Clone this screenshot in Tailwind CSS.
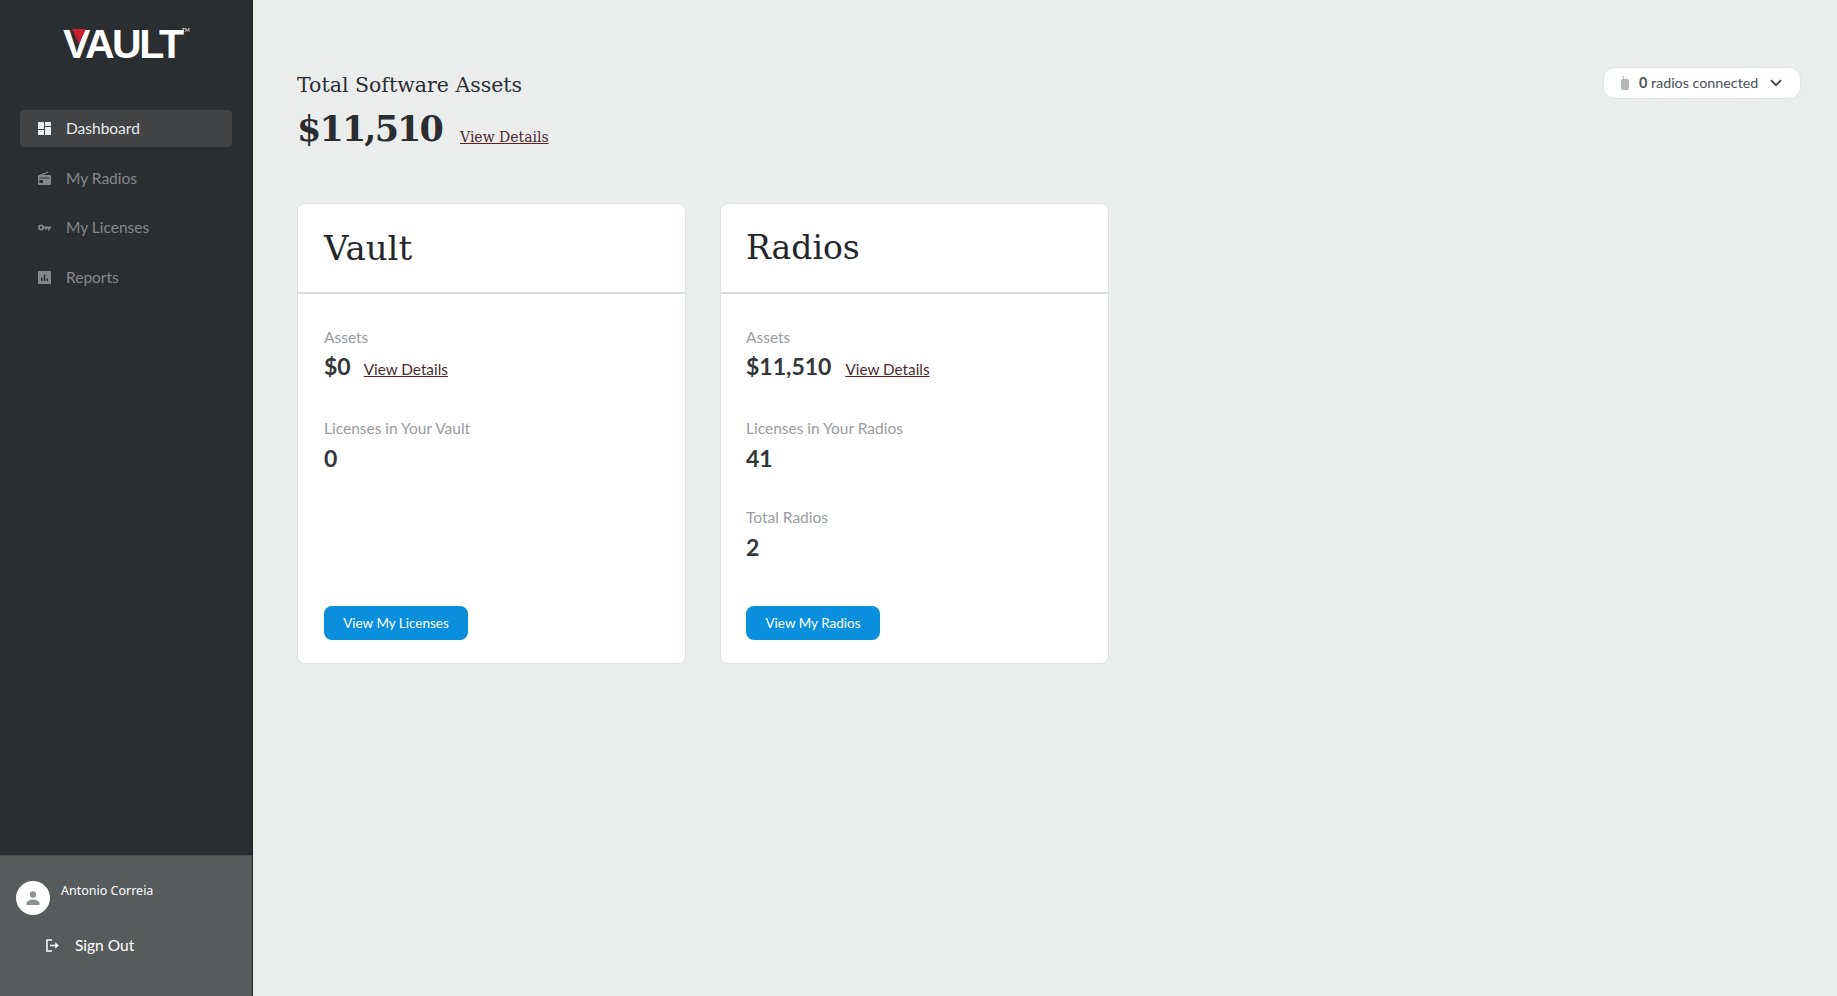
<!DOCTYPE html>
<html lang="en">
<head>
    <meta charset="UTF-8">
    <title>Vault Dashboard</title>
    <script src="https://cdn.jsdelivr.net/npm/@tailwindcss/browser@4"></script>
</head>
<body class="bg-[#ebecec] font-['Lato',sans-serif] h-[996px] overflow-hidden">
    <div class="flex h-[996px] w-[1837px] overflow-hidden">
        <!-- sidebar -->
        <aside class="w-[253px] shrink-0 h-[996px] flex flex-col bg-[#2b2e31] border-r border-[#1f2123]">
            <div class="h-[110px] pl-[63px] pt-[19px]">
                <div class="relative w-[126px] h-[50px]">
                    <span class="font-['Liberation_Sans',sans-serif] font-bold text-white text-[41px] leading-[50px] tracking-[-2.4px]">VAULT</span>
                    <svg class="absolute left-[9px] top-[10px]" width="14" height="15" viewBox="0 0 14 15"><path d="M0 0h14L7 15z" fill="#c8202f"/></svg>
                    <span class="absolute left-[119px] top-[9px] text-white text-[5px] leading-none">TM</span>
                </div>
            </div>
            <nav class="flex-1 px-5 flex flex-col gap-[12.7px] text-[15.5px]">
                <a class="h-[37px] rounded flex items-center bg-[#414345] text-[#e8eaec] pl-[18px] gap-[15px]">
                    <svg width="13" height="13" viewBox="0 0 13 13" fill="#e8eaec"><path d="M0 0h6v7H0zM7 0h6v4H7zM7 5h6v8H7zM0 8h6v5H0z"/></svg>
                    <span>Dashboard</span>
                </a>
                <a class="h-[37px] flex items-center text-[#85888a] pl-[18px] gap-[15px]">
                    <svg width="13" height="14" viewBox="0 0 13 14" fill="#85888a"><path d="M1 4 10 .5l.4 1L4.500 4H12a1 1 0 0 1 1 1v8a1 1 0 0 1-1 1H1a1 1 0 0 1-1-1V5a1 1 0 0 1 1-1z"/><path d="M1.500 6.500h10v1h-10zM1.500 9h3.500v3h-3.500z" fill="#2b2e31"/></svg>
                    <span>My Radios</span>
                </a>
                <a class="h-[37px] flex items-center text-[#85888a] pl-[18px] gap-[15px]">
                    <svg width="13" height="12" viewBox="0 0 14 13" fill="none"><circle cx="3.200" cy="6" r="2.300" stroke="#85888a" stroke-width="1.800"/><path d="M5.500 5h8.500v2h-1.500v2.200h-1.800V7H9.200v1.500H7.500V7h-2z" fill="#85888a"/></svg>
                    <span>My Licenses</span>
                </a>
                <a class="h-[37px] flex items-center text-[#85888a] pl-[18px] gap-[15px]">
                    <svg width="13" height="13" viewBox="0 0 13 13"><path d="M0 0h13v13H0z" fill="#85888a"/><path d="M3 6.500h1.500v3.500H3zM5.800 3.500h1.500V10H5.800zM8.600 7.500h1.500V10H8.600z" fill="#2b2e31"/></svg>
                    <span>Reports</span>
                </a>
            </nav>
            <div class="h-[141px] bg-[#585b5c] border-t border-[#4a4d4e]">
                <div class="flex pl-4 pt-[25px] gap-[11px]">
                    <div class="w-[34px] h-[34px] rounded-full bg-white flex items-center justify-center">
                        <svg width="16" height="16" viewBox="0 0 16 16" fill="#8e9194"><circle cx="8" cy="4.500" r="3.200"/><path d="M1.500 15v-2c0-2.300 4.300-3.500 6.500-3.500s6.500 1.200 6.500 3.500v2z"/></svg>
                    </div>
                    <span class="text-white text-[12.5px] leading-4 mt-[2px] font-['Noto_Sans',sans-serif]">Antonio Correia</span>
                </div>
                <div class="flex items-center pl-[46px] gap-[15px] mt-[19px] text-white text-[15.5px]">
                    <svg width="14" height="13" viewBox="0 0 14 13" fill="none" stroke="#fff" stroke-width="1.500"><path d="M6 1H1v11h5"/><path d="M4 6.500h7"/><path d="M9.500 3.700 12.500 6.500 9.500 9.300z" fill="#fff" stroke-width="0.500"/></svg>
                    <span>Sign Out</span>
                </div>
            </div>
        </aside>

        <!-- main -->
        <main class="flex-1 pl-11 pr-9 pt-[68px]">
            <div class="flex justify-between items-start">
                <div>
                    <h2 class="font-['DejaVu_Serif',serif] text-[#2b2e31] text-[20.5px] leading-[34px]">Total Software Assets</h2>
                    <div class="flex items-baseline gap-[18px] mt-1">
                        <span class="font-['DejaVu_Serif',serif] font-bold text-[#2b2e31] text-[35px] leading-[46px] tracking-[-1.9px]">$11,510</span>
                        <a class="font-['DejaVu_Serif',serif] text-[#4a2a2e] text-[14px] underline decoration-[#6b1a1f] relative top-px">View Details</a>
                    </div>
                </div>
                <button class="w-[198px] h-[32px] -mt-px bg-white rounded-xl border border-[#e2e4e4] flex items-center pl-4 text-[#4a4f55] text-[14.3px]">
                    <svg width="10" height="14" viewBox="0 0 10 14" fill="#b4b6b8"><path d="M3 0h1v3h3.500A1.500 1.500 0 0 1 9 4.500V12a2 2 0 0 1-2 2H3a2 2 0 0 1-2-2V4.500A1.500 1.500 0 0 1 2.500 3H3z"/></svg>
                    <span class="ml-[9px]"><b class="font-bold">0</b> radios connected</span>
                    <svg class="ml-3" width="12" height="8" viewBox="0 0 12 8" fill="none" stroke="#3d4248" stroke-width="1.800"><path d="M1 1.200 6 6.200l5-5"/></svg>
                </button>
            </div>

            <div class="flex gap-[34px] mt-[51px]">
                <section class="w-[389px] h-[461px] bg-white rounded-lg border border-[#e0e2e2] flex flex-col">
                    <h3 class="h-[90px] shrink-0 pl-[26px] flex items-center border-b-2 border-[#dcdddd] font-['DejaVu_Serif',serif] text-[#24272a] text-[34px]">Vault</h3>
                    <div class="flex-1 pl-[26px] pt-[33px] flex flex-col">
                        <p class="text-[#9a9c9e] text-[15.5px] leading-5">Assets</p>
                        <div class="flex items-baseline gap-[13px] mt-[2px] h-[36px]">
                            <span class="font-bold text-[#33373a] text-[23px]">$0</span>
                            <a class="text-[#4a2a2e] text-[15.3px] underline decoration-[#6b1a1f]">View Details</a>
                        </div>
                        <p class="text-[#9a9c9e] text-[15.5px] leading-5 mt-[33px]">Licenses in Your Vault</p>
                        <p class="font-bold text-[#33373a] text-[23px] leading-[36px] mt-[2px]">0</p>
                        <a class="mt-auto mb-[23px] w-[144px] h-[34px] rounded-lg bg-[#0a8fdc] text-white text-[13.5px] flex items-center justify-center">View My Licenses</a>
                    </div>
                </section>
                <section class="w-[389px] h-[461px] bg-white rounded-lg border border-[#e0e2e2] flex flex-col">
                    <h3 class="h-[90px] shrink-0 pl-[25px] flex items-center border-b-2 border-[#dcdddd] font-['DejaVu_Serif',serif] text-[#24272a] text-[33px]">Radios</h3>
                    <div class="flex-1 pl-[25px] pt-[33px] flex flex-col">
                        <p class="text-[#9a9c9e] text-[15.5px] leading-5">Assets</p>
                        <div class="flex items-baseline gap-[14px] mt-[2px] h-[36px]">
                            <span class="font-bold text-[#33373a] text-[23px]">$11,510</span>
                            <a class="text-[#4a2a2e] text-[15.3px] underline decoration-[#6b1a1f]">View Details</a>
                        </div>
                        <p class="text-[#9a9c9e] text-[15.5px] leading-5 mt-[33px]">Licenses in Your Radios</p>
                        <p class="font-bold text-[#33373a] text-[23px] leading-[36px] mt-[2px]">41</p>
                        <p class="text-[#9a9c9e] text-[15.5px] leading-5 mt-[31px]">Total Radios</p>
                        <p class="font-bold text-[#33373a] text-[23px] leading-[36px] mt-[2px]">2</p>
                        <a class="mt-auto mb-[23px] w-[134px] h-[34px] rounded-lg bg-[#0a8fdc] text-white text-[13.5px] flex items-center justify-center">View My Radios</a>
                    </div>
                </section>
            </div>
        </main>
    </div>
</body>
</html>
